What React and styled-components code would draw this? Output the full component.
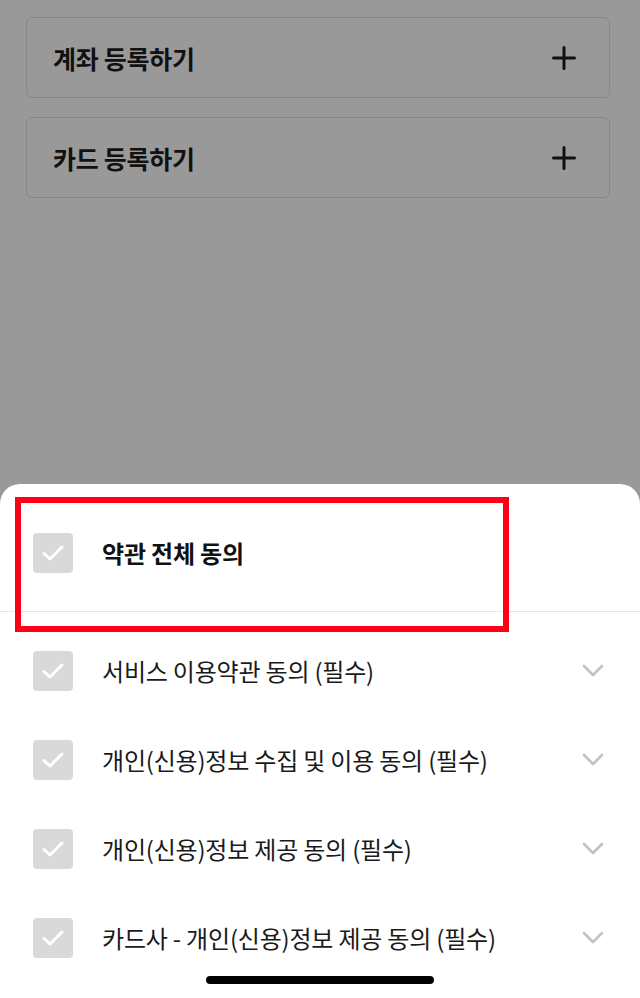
import React from 'react';
import styled, { createGlobalStyle } from 'styled-components';

const GlobalStyle = createGlobalStyle`
  html, body {
    margin: 0;
    padding: 0;
    background: #999999;
  }
  body {
    font-family: "Noto Sans CJK KR", "Noto Sans", sans-serif;
  }
  * {
    box-sizing: border-box;
  }
`;

const Screen = styled.div`
  width: 640px;
  height: 998px;
  display: flex;
  flex-direction: column;
  overflow: hidden;
  background: #999999;
`;

const Dimmed = styled.div`
  flex: 1;
  display: flex;
  flex-direction: column;
  gap: 19px;
  padding: 17px 30px 0 26px;
`;

const RegisterCard = styled.div`
  height: 81px;
  border: 1px solid #878787;
  border-radius: 6px;
  display: flex;
  align-items: center;
  justify-content: space-between;
  padding: 0 33px 0 26px;
`;

const CardTitle = styled.span`
  font-size: 25px;
  font-weight: 700;
  color: #111;
  letter-spacing: -0.3px;
  line-height: 1;
  margin-top: 2px;
`;

const Sheet = styled.div`
  position: relative;
  background: #fff;
  border-radius: 20px 20px 0 0;
  padding-bottom: 16px;
`;

const AllRow = styled.div`
  display: flex;
  align-items: center;
  gap: 29px;
  padding: 49px 32px 38px 33px;
  border-bottom: 1px solid #e6e6e6;
`;

const AllLabel = styled.span`
  font-size: 24px;
  font-weight: 700;
  color: #111;
  letter-spacing: -0.2px;
  line-height: 1;
`;

const TermList = styled.div`
  padding-top: 14px;
`;

const TermRow = styled.div`
  height: 89px;
  display: flex;
  align-items: center;
  gap: 29px;
  padding: 0 36px 0 33px;
`;

const TermLabel = styled.span`
  flex: 1;
  font-size: 24px;
  font-weight: 400;
  color: #1a1a1a;
  letter-spacing: -0.2px;
  line-height: 1;
`;

const Box = styled.span`
  width: 40px;
  height: 40px;
  flex: none;
  border-radius: 4px;
  background: #d9d9d9;
  display: flex;
  align-items: center;
  justify-content: center;
`;

const Highlight = styled.div`
  position: absolute;
  left: 15px;
  top: 13px;
  width: 494px;
  height: 135px;
  border: 6px solid #ff0018;
  pointer-events: none;
`;

const HomeBar = styled.div`
  position: absolute;
  left: 206px;
  bottom: 14px;
  width: 228px;
  height: 8px;
  border-radius: 4px;
  background: #000;
`;

const Check = () => (
  <Box>
    <svg width="22" height="16" viewBox="0 0 22 16" fill="none">
      <path d="M2 8.5 L8 14 L20 2" stroke="#fff" strokeWidth="3" strokeLinecap="round" strokeLinejoin="round" />
    </svg>
  </Box>
);

const PlusIcon = () => (
  <svg width="24" height="24" viewBox="0 0 24 24" fill="none">
    <path d="M12 1.5 V22.5 M1.5 12 H22.5" stroke="#111" strokeWidth="3" strokeLinecap="round" />
  </svg>
);

const Chevron = () => (
  <svg width="22" height="13" viewBox="0 0 22 13" fill="none">
    <path d="M2 2 L11 11 L20 2" stroke="#c2c2c2" strokeWidth="2.6" strokeLinecap="round" strokeLinejoin="round" />
  </svg>
);

const terms = [
  '서비스 이용약관 동의 (필수)',
  '개인(신용)정보 수집 및 이용 동의 (필수)',
  '개인(신용)정보 제공 동의 (필수)',
  '카드사 - 개인(신용)정보 제공 동의 (필수)',
];

export default function App() {
  return (
    <Screen>
      <GlobalStyle />
      <Dimmed>
        <RegisterCard>
          <CardTitle>계좌 등록하기</CardTitle>
          <PlusIcon />
        </RegisterCard>
        <RegisterCard>
          <CardTitle>카드 등록하기</CardTitle>
          <PlusIcon />
        </RegisterCard>
      </Dimmed>

      <Sheet>
        <AllRow>
          <Check />
          <AllLabel>약관 전체 동의</AllLabel>
        </AllRow>
        <TermList>
          {terms.map((term, i) => (
            <TermRow key={i}>
              <Check />
              <TermLabel>{term}</TermLabel>
              <Chevron />
            </TermRow>
          ))}
        </TermList>
        <Highlight />
        <HomeBar />
      </Sheet>
    </Screen>
  );
}
